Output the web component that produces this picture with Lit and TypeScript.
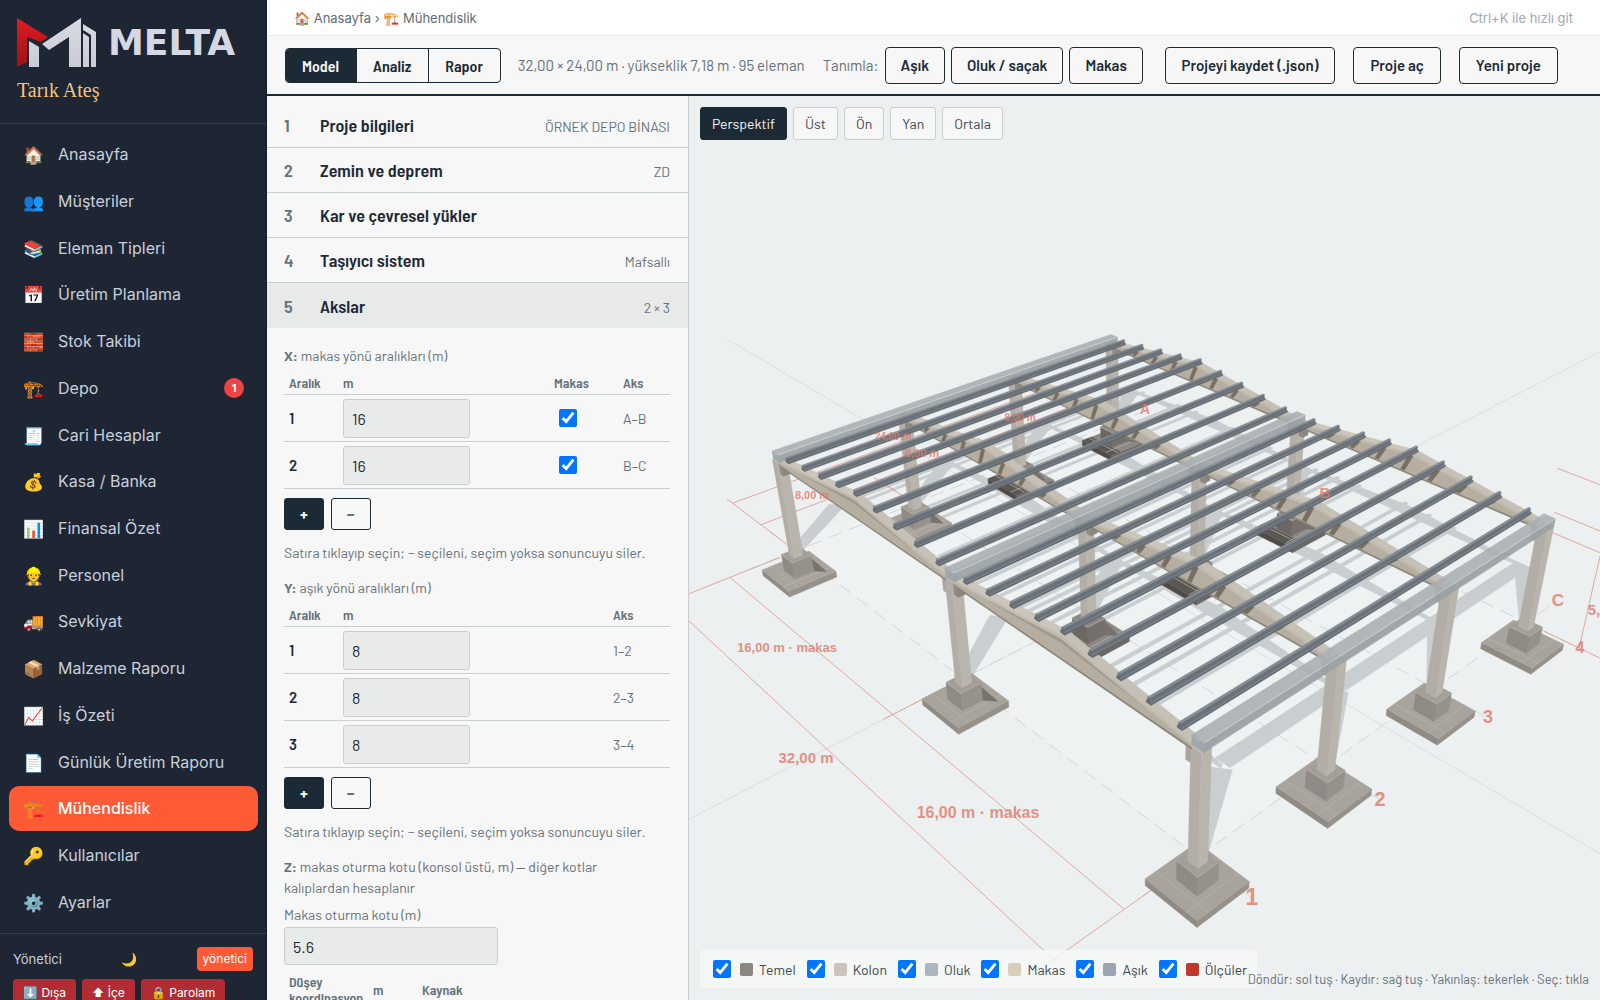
import { LitElement, html, svg, css } from "lit";
import { customElement, state } from "lit/decorators.js";
import { classMap } from "lit/directives/class-map.js";

type P3 = [number, number, number];

/* ---------- camera ---------- */
const VIEW_W = 911;
const VIEW_H = 904;
const CAM = { x: 56.734, y: -26.007, z: 36.639, azimuth: 2.391, tilt: 0.5507, focal: 1234.86 };
const FORWARD: P3 = [
  Math.cos(CAM.tilt) * Math.cos(CAM.azimuth),
  Math.cos(CAM.tilt) * Math.sin(CAM.azimuth),
  -Math.sin(CAM.tilt),
];
const RIGHT: P3 = [Math.sin(CAM.azimuth), -Math.cos(CAM.azimuth), 0];
const UP: P3 = [
  RIGHT[1] * FORWARD[2],
  -RIGHT[0] * FORWARD[2],
  RIGHT[0] * FORWARD[1] - RIGHT[1] * FORWARD[0],
];
const dot = (a: P3, b: P3) => a[0] * b[0] + a[1] * b[1] + a[2] * b[2];
const project = (p: P3): [number, number] => {
  const d: P3 = [p[0] - CAM.x, p[1] - CAM.y, p[2] - CAM.z];
  const depth = dot(d, FORWARD);
  return [VIEW_W / 2 + (CAM.focal * dot(d, RIGHT)) / depth, VIEW_H / 2 - (CAM.focal * dot(d, UP)) / depth];
};
const pointList = (pts: P3[]) => pts.map((p) => project(p).map((v) => v.toFixed(1)).join(",")).join(" ");
const face = (fill: string, ...pts: P3[]) =>
  svg`<polygon points=${pointList(pts)} fill=${fill} stroke=${fill} stroke-width="0.4" />`;
const line = (cls: string, a: P3, b: P3) => {
  const [x1, y1] = project(a);
  const [x2, y2] = project(b);
  return svg`<line class=${cls} x1=${x1} y1=${y1} x2=${x2} y2=${y2} />`;
};
const box = (x0: number, x1: number, y0: number, y1: number, z0: number, z1: number, c: string[]) => [
  face(c[1], [x0, y0, z0], [x1, y0, z0], [x1, y0, z1], [x0, y0, z1]),
  face(c[2], [x1, y0, z0], [x1, y1, z0], [x1, y1, z1], [x1, y0, z1]),
  face(c[0], [x0, y0, z1], [x1, y0, z1], [x1, y1, z1], [x0, y1, z1]),
];

/* ---------- building ---------- */
const AXES_X = [0, 16, 32];
const AXES_Y = [24, 16, 8, 0];
const BEARING = 5.6;
const RIDGE = 7.18;
const SLOPE = 0.1207;
const PURLINS = [-4, -3, -2, -1, 0, 1, 2, 3, 4].map((k) => k * 1.7316);
const roofAt = (offset: number) => RIDGE - Math.abs(offset) * SLOPE;
const SUN = [-0.54, 0.8];
const shade = (x: number, y: number, z: number): P3 => [x + SUN[0] * z, y + SUN[1] * z, 0];

const shadowStrip = (x0: number, x1: number, y0: number, y1: number, z: number) =>
  face("#c3c8cb", shade(x0, y0, z), shade(x1, y0, z), shade(x1, y1, z), shade(x0, y1, z));

const shadows = () => svg`<g opacity="0.85">
  ${AXES_Y.map((y) =>
    AXES_X.map((x) =>
      face("#c3c8cb", [x - 0.3, y - 0.2, 0], [x + 0.3, y + 0.2, 0], shade(x + 0.4, y + 0.3, BEARING), shade(x - 0.4, y - 0.3, BEARING))))}
  ${AXES_X.map((x) => shadowStrip(x - 0.45, x + 0.45, 0, 24, 6))}
  ${AXES_Y.map((y) =>
    [8, 24].map((mid) =>
      face("#c3c8cb", shade(mid - 8, y, BEARING), shade(mid - 8, y, 5.9), shade(mid, y, 6.9), shade(mid + 8, y, 5.9), shade(mid + 8, y, BEARING))))}
  ${[8, 24].map((mid) => PURLINS.map((o) => shadowStrip(mid + o - 0.14, mid + o + 0.14, 0, 24, roofAt(o))))}
</g>`;

const ground = () => svg`
  ${face("#eef2f3", [-1, 0, 0], [32, 0, 0], [32, 24, 0], [-1, 24, 0])}
  ${line("grid", [-32, 12, 0], [48, 12, 0])}
  ${line("grid", [16, -20, 0], [16, 62, 0])}
  ${AXES_X.map((x) => line("axis", [x, -3, 0], [x, 27, 0]))}
  ${AXES_Y.map((y) => line("axis", [-3, y, 0], [35, y, 0]))}
`;

const dimensions = () => svg`
  ${line("dim", [0, -4, 0], [32, -4, 0])}
  ${line("dim", [0, -7.5, 0], [32, -7.5, 0])}
  ${line("dim", [0, -1, 0], [0, -8, 0])}
  ${line("dim", [16, -1, 0], [16, -4.5, 0])}
  ${line("dim", [32, -1, 0], [32, -8, 0])}
  ${line("dim", [-4, 0, 0], [-4, 24, 0])}
  ${line("dim", [-7.5, 0, 0], [-7.5, 24, 0])}
  ${line("dim", [-8.2, 0, 0], [-1, 0, 0])}
  ${line("dim", [-4.5, 8, 0], [-1, 8, 0])}
  ${line("dim", [-4.5, 16, 0], [-1, 16, 0])}
  ${line("dim", [-8.2, 24, 0], [-1, 24, 0])}
  ${line("dim", [33, 24, 0], [40, 24, 0])}
  ${line("dim", [32, 24, BEARING], [35, 24, BEARING])}
  ${line("dim", [35, 24, 0], [35, 24, BEARING])}
  ${line("dim", [32.3, 24, 6.7], [40, 24, 6.7])}
  ${line("dim", [32, 24, 9], [40, 24, 9])}
`;

const footing = (x: number, y: number) => {
  const dim = (x === 0 && y >= 16) || (x === 16 && y >= 8);
  const pad = dim ? ["#8d8883", "#4f4b48", "#6d6863"] : ["#a8a39c", "#918b85", "#979189"];
  const stub = dim ? ["#8c8782", "#6b6763", "#75706b"] : ["#a39e97", "#8f8a85", "#96918a"];
  return [
    box(x - 1.5, x + 1.5, y - 1.5, y + 1.5, -1.7, -1.31, pad),
    dim ? face("#5b5753", [x - 1.5, y - 1.5, -1.31], [x + 1.5, y - 1.5, -1.31], [x + 1.5, y - 0.7, -1.31], [x - 1.5, y - 0.7, -1.31]) : null,
    line("seam", [x - 1.5, y - 0.9, -1.31], [x + 1.5, y - 0.9, -1.31]),
    line("seam", [x + 0.9, y - 1.5, -1.31], [x + 0.9, y + 1.5, -1.31]),
    x < 32 ? face("#77726d", [x + 0.6, y + 0.6, -1.31], [x + 1.2, y + 1.1, -1.31], [x + 0.6, y + 0.6, -0.5]) : null,
    box(x - 0.6, x + 0.6, y - 0.6, y + 0.6, -1.31, -0.25, stub),
    line("seam", [x - 0.6, y - 0.6, -0.25], [x + 0.6, y - 0.6, -0.25]),
    line("seam", [x + 0.6, y - 0.6, -0.25], [x + 0.6, y + 0.6, -0.25]),
  ];
};

const column = (x: number, y: number) => [
  x > 0 ? box(x - 0.6, x - 0.28, y - 0.22, y + 0.22, 4.9, BEARING, ["#c4beb4", "#aaa49b", "#a19a91"]) : null,
  box(x - 0.28, x + 0.28, y - 0.28, y + 0.28, -0.25, BEARING + 0.2, ["#c4beb5", "#b2ada6", "#b9b4ac"]),
  x < 32 ? box(x + 0.28, x + 0.6, y - 0.22, y + 0.22, 5.1, BEARING, ["#c4beb4", "#8f8a83", "#8b857d"]) : null,
];

const truss = (mid: number, y: number) => {
  const a = mid - 7.7;
  const b = mid + 7.7;
  const w = 0.22;
  const e = 5.95;
  const r = 6.88;
  return [
    face("#88837a", [a, y - w, BEARING], [b, y - w, BEARING], [b, y - w, BEARING + 0.12], [a, y - w, BEARING + 0.12]),
    face("#b5aea1", [a, y - w, BEARING + 0.1], [b, y - w, BEARING + 0.1], [b, y - w, e], [mid, y - w, r], [a, y - w, e]),
    y > 0
      ? PURLINS.slice(1, 8).map((o) =>
          face("#786f63",
            [mid + o - 0.2, y - w, roofAt(o) - 0.4], [mid + o + 0.1, y - w, roofAt(o) - 0.4],
            [mid + o - 0.35, y - w, BEARING + 0.12], [mid + o - 0.6, y - w, BEARING + 0.12]))
      : face("#a1998c", [mid - 5, y - w, 6.1], [mid, y - w, 6.68], [mid + 5, y - w, 6.1], [mid, y - w, 6.5]),
    face("#c2bcb0", [a, y - w, e - 0.15], [mid, y - w, r - 0.15], [mid, y - w, r], [a, y - w, e]),
    face("#c2bcb0", [b, y - w, e - 0.15], [mid, y - w, r - 0.15], [mid, y - w, r], [b, y - w, e]),
    face("#cbc6bb", [a, y - w, e], [mid, y - w, r], [mid, y + w, r], [a, y + w, e]),
    face("#c6c1b6", [mid, y - w, r], [b, y - w, e], [b, y + w, e], [mid, y + w, r]),
  ];
};

const gutter = (x: number) => svg`<g opacity="0.9">
  ${box(x - 0.32, x + 0.32, -0.2, 24.2, 5.8, 6.28, ["#abb0b3", "#9da5a9", "#9ba1a4"])}
  ${line("rim", [x + 0.32, -0.2, 6.28], [x + 0.32, 24.2, 6.28])}
</g>`;

const purlin = (mid: number, o: number) => {
  const x = mid + o;
  const z = roofAt(o);
  return [
    box(x - 0.14, x + 0.14, -0.1, 24.1, z - 0.3, z - 0.2, ["#757d85", "#5f666d", "#626970"]),
    box(x - 0.06, x + 0.06, -0.1, 24.1, z - 0.2, z, ["#858c93", "#646b72", "#6a7178"]),
  ];
};

const LABELS: [string, number, number, number][] = [
  ["1", 563, 802, 23], ["2", 691, 704, 20], ["3", 799, 622, 18], ["4", 891, 552, 16],
  ["A", 456, 314, 14], ["B", 636, 397, 15], ["C", 869, 505, 17],
  ["16,00 m · makas", 98, 552, 13], ["32,00 m", 117, 662, 15], ["16,00 m · makas", 289, 717, 16],
  ["8,00 m", 123, 400, 11], ["24,00 m", 204, 341, 10], ["8,00 m", 233, 358, 11], ["8,00 m", 331, 322, 10],
  ["5,60 m", 922, 514, 15],
];

/* ---------- data ---------- */
const NAV: [string, string, number?][] = [
  ["🏠", "Anasayfa"], ["👥", "Müşteriler"], ["📚", "Eleman Tipleri"], ["📅", "Üretim Planlama"],
  ["🧱", "Stok Takibi"], ["🏗️", "Depo", 1], ["🧾", "Cari Hesaplar"], ["💰", "Kasa / Banka"],
  ["📊", "Finansal Özet"], ["👷", "Personel"], ["🚚", "Sevkiyat"], ["📦", "Malzeme Raporu"],
  ["📈", "İş Özeti"], ["📄", "Günlük Üretim Raporu"], ["🏗️", "Mühendislik"], ["🔑", "Kullanıcılar"], ["⚙️", "Ayarlar"],
];
const STEPS: [string, string][] = [
  ["Proje bilgileri", "ÖRNEK DEPO BİNASI"], ["Zemin ve deprem", "ZD"], ["Kar ve çevresel yükler", ""],
  ["Taşıyıcı sistem", "Mafsallı"], ["Akslar", "2 × 3"],
];
const LAYERS: [string, string][] = [
  ["Temel", "#8a8880"], ["Kolon", "#c9c3b9"], ["Oluk", "#a9b8c0"], ["Makas", "#d9cfb8"], ["Aşık", "#9aa5b1"], ["Ölçüler", "#c0392b"],
];

@customElement("app-root")
export class AppRoot extends LitElement {
  @state() private view = "Perspektif";
  @state() private mode = "Model";

  static styles = css`
    :host { display: grid; grid-template-columns: 267px minmax(0, 1fr); height: 100vh; overflow: hidden;
      font-family: Barlow, Roboto, sans-serif; font-size: 14px; color: #1c2a35; background: #f7f7f7; }
    * { box-sizing: border-box; }
    button, input { font: inherit; color: inherit; }
    button { cursor: pointer; }
    a { color: inherit; text-decoration: none; }

    .side { display: flex; flex-direction: column; min-height: 0; background: #1e2533; color: #c8cfdb;
      border-right: 1px solid #161b26; font-family: Inter, sans-serif; }
    .brand { height: 124px; padding: 17px 0 0 17px; border-bottom: 1px solid #343c4d; flex: none; }
    .logo { display: flex; align-items: center; gap: 12px; height: 51px; }
    .mark { width: 79px; height: 50px; flex: none; }
    .word { font: 800 36px/36px "DejaVu Sans", sans-serif; color: #d5d8e2; }
    .owner { font: 20px/24px "Liberation Serif", serif; color: #f3c480; margin-top: 10px; }
    .nav { flex: 1; display: grid; grid-auto-rows: 1fr; gap: 2px; padding: 8px 8px 9px 9px; min-height: 0; }
    .item { display: flex; align-items: center; gap: 14px; padding: 0 14px; border-radius: 10px; font-size: 16px; line-height: 20px; min-height: 0; }
    .item.on { background: #ff5a36; color: #fff; font-weight: 500; }
    .item .ico { width: 21px; padding-top: 2px; font-size: 17px; }
    .item .txt { flex: 1; white-space: nowrap; }
    .count { width: 20px; height: 20px; border-radius: 10px; background: #ef4444; color: #fff; font-size: 11px; font-weight: 700; text-align: center; }
    .foot { flex: none; height: 67px; overflow: hidden; border-top: 1px solid #343c4d; padding: 13px 13px 0; }
    .who { display: flex; align-items: center; justify-content: space-between; font-size: 13px; line-height: 24px; }
    .moon { border: 0; background: none; padding: 0; font-size: 13px; }
    .role { background: #ff5a36; color: #fff; border-radius: 4px; padding: 0 6px; font-size: 12px; }
    .acts { display: flex; gap: 6px; margin-top: 8px; }
    .acts button { border: 0; border-radius: 4px; background: #b22d33; color: #fff; font-size: 12px; line-height: 16px; padding: 6px 10px; white-space: nowrap; }

    .main { display: flex; flex-direction: column; min-width: 0; min-height: 0; }
    .crumbs { flex: none; display: flex; justify-content: space-between; align-items: center; height: 36px; padding: 0 27px;
      background: #fff; border-bottom: 1px solid #e4e6e8; font: 13px/20px Inter, sans-serif; color: #5f6b7a; }
    .crumbs .hint { color: #a0a8b6; }
    .bar { flex: none; display: flex; align-items: center; height: 60px; padding: 0 42px 0 18px; border-bottom: 2px solid #1c2a35; }
    .seg { display: flex; border: 1px solid #1c2a35; border-radius: 4px; overflow: hidden; margin-right: 17px; }
    .seg button { height: 33px; padding: 2px 17px 0 16px; border: 0; border-left: 1px solid #1c2a35; background: transparent; font: 600 16px/20px "Barlow Semi Condensed", Roboto, sans-serif; }
    .seg button:first-child { border-left: 0; }
    .seg button.on { background: #1c2a35; color: #f7f7f7; }
    .info { color: #65727b; font-size: 15px; white-space: nowrap; margin-right: 18px; }
    .def { color: #65727b; font-size: 15px; margin-right: 6px; }
    .btn { height: 37px; padding: 0 15px; border: 1px solid #1c2a35; border-radius: 4px; background: transparent; font-weight: 600; font-size: 15px; white-space: nowrap; }
    .group { display: flex; gap: 6px; }
    .files { display: flex; gap: 18px; margin-left: auto; }
    .files .btn { padding: 0 16px; }

    .work { flex: 1; display: grid; grid-template-columns: 422px minmax(0, 1fr); min-height: 0; }
    .panel { border-right: 1px solid #c9ced0; overflow: hidden; padding-top: 7px; min-height: 0; }
    .step { display: flex; align-items: center; width: 100%; height: 45px; padding: 0 18px 0 17px; border: 0; border-bottom: 1px solid #c9ced0;
      background: transparent; text-align: left; }
    .step.on { background: #e8eaea; border-bottom: 0; }
    .step .n { width: 36px; color: #65727b; }
    .step .n, .step .t { font: 600 18px/24px "Barlow Semi Condensed", Roboto, sans-serif; }
    .step .v { margin-left: auto; color: #65727b; padding-top: 3px; }
    .body { padding: 17px 18px 0 17px; color: #65727b; line-height: 21px; }
    .body p { margin: 0; }
    .lead { padding-right: 12px; }
    .lead b { font-weight: 700; }
    table { width: 100%; border-collapse: collapse; table-layout: fixed; color: #65727b; }
    th { font: 600 14px/16px "Barlow Semi Condensed", Roboto, sans-serif; text-align: left; padding: 9px 5px 3px; height: 28px; }
    tr { border-bottom: 1px solid #c9ced0; }
    td { height: 47px; padding: 0 5px; }
    tbody th { font: 600 15px/20px Barlow, Roboto, sans-serif; color: #1c2a35; padding: 0 5px; height: 47px; }
    .c1 { width: 54px; } .c2 { width: 211px; } .c2y { width: 270px; } .c3 { width: 69px; }
    .l1 { width: 84px; } .l2 { width: 49px; }
    .field { height: 39px; padding: 0 8px; border: 1px solid #c9ced0; border-radius: 3px; background: #e9ebeb; color: #1c2a35; font-size: 16px; }
    .len { width: 127px; display: block; }
    .tick { width: 18px; height: 18px; margin: 0; display: block; }
    td .tick { margin-left: 5px; }
    .pm { display: flex; gap: 7px; margin: 9px 0 12px; }
    .pm button { width: 40px; height: 32px; padding: 0; border: 1px solid #1c2a35; border-radius: 3px; background: transparent; font-weight: 700; font-size: 16px; line-height: 20px; }
    .pm .add { background: #1c2a35; color: #fff; }
    .note { padding-bottom: 14px; }
    .kot { display: block; padding-top: 6px; line-height: 21px; }
    .seat { display: block; width: 214px; height: 38px; margin-top: 2px; }
    .levels { width: 214px; }
    .levels tr { border: 0; }

    .canvas { position: relative; min-width: 0; min-height: 0; background: #ecf0f1; overflow: hidden; }
    .scene { display: block; width: 100%; height: 100%; }
    .grid { stroke: #dcdfe0; stroke-width: 1; }
    .axis { stroke: #d3d7d9; stroke-width: 1; stroke-dasharray: 14 8; }
    .dim { stroke: #e08a7c; stroke-width: 1; opacity: 0.7; }
    .seam { stroke: #bbb6b0; stroke-width: 1; opacity: 0.7; }
    .rim { stroke: #c6cbcd; stroke-width: 1; }
    .label { font-family: "Liberation Sans", sans-serif; font-weight: 700; fill: #de7b6b; opacity: 0.8; text-anchor: middle; dominant-baseline: central; }
    .views { position: absolute; left: 11px; top: 11px; display: flex; gap: 6px; }
    .views button { height: 33px; padding: 0 11px; border: 1px solid #c9ced0; border-radius: 3px; background: #f7f7f7; font-size: 14px; color: #3a4750; }
    .views button.on { background: #1c2a35; border-color: #1c2a35; color: #f7f7f7; }
    .legend { position: absolute; left: 11px; bottom: 12px; display: flex; align-items: center; gap: 11px; height: 38px; padding: 0 10px 0 13px;
      border-radius: 4px; background: rgba(247, 248, 248, 0.8); }
    .layer { display: flex; align-items: center; color: #3a4750; font-size: 14px; }
    .sw { width: 13px; height: 13px; border-radius: 2px; margin: 0 6px 0 9px; }
    .help { position: absolute; right: 11px; bottom: 11px; color: #65727b; line-height: 20px; font-size: 13px; }
  `;

  private axisTable(name: string, rows: [string, string][], withTruss: boolean) {
    return html`<table>
      <colgroup>
        <col class="c1" /><col class=${withTruss ? "c2" : "c2y"} />${withTruss ? html`<col class="c3" />` : null}<col />
      </colgroup>
      <thead>
        <tr><th scope="col">Aralık</th><th scope="col">m</th>${withTruss ? html`<th scope="col">Makas</th>` : null}<th scope="col">Aks</th></tr>
      </thead>
      <tbody>
        ${rows.map(([value, axis], i) => html`<tr>
          <th scope="row">${i + 1}</th>
          <td><input class="field len" type="text" aria-label="${name} ${i + 1} m" .value=${value} /></td>
          ${withTruss ? html`<td><input class="tick" type="checkbox" aria-label="Makas ${i + 1}" checked /></td>` : null}
          <td>${axis}</td>
        </tr>`)}
      </tbody>
    </table>
    <div class="pm"><button class="add">+</button><button>−</button></div>
    <p class="note">Satıra tıklayıp seçin; − seçileni, seçim yoksa sonuncuyu siler.</p>`;
  }

  private scene() {
    return svg`<svg class="scene" viewBox="0 1 ${VIEW_W} ${VIEW_H}" preserveAspectRatio="xMidYMid slice" role="img" aria-label="Model">
      ${ground()}
      ${shadows()}
      ${dimensions()}
      ${AXES_Y.map((y) => AXES_X.map((x) => footing(x, y)))}
      ${AXES_Y.map((y) => AXES_X.map((x) => column(x, y)))}
      ${AXES_Y.map((y) => [truss(8, y), truss(24, y)])}
      ${AXES_X.map((x) => gutter(x))}
      ${[8, 24].map((mid) => PURLINS.map((o) => purlin(mid, o)))}
      ${LABELS.map(([t, x, y, s]) => svg`<text class="label" x=${x} y=${y} font-size=${s}>${t}</text>`)}
    </svg>`;
  }

  render() {
    return html`
      <aside class="side">
        <div class="brand">
          <div class="logo">
            <svg class="mark" viewBox="0 0 79 50" aria-hidden="true">
              <defs>
                <linearGradient id="r" x1="0" y1="0" x2="0" y2="1"><stop offset="0" stop-color="#e01b22" /><stop offset="1" stop-color="#9c1218" /></linearGradient>
                <linearGradient id="s" x1="0" y1="0" x2="0" y2="1"><stop offset="0" stop-color="#d9dbe3" /><stop offset="1" stop-color="#c9ccd6" /></linearGradient>
              </defs>
              <path fill="url(#r)" d="M0 0 31 19 24 24 10 19V44L0 49Z" />
              <path fill="url(#s)" d="M12 23 22 29V49H12ZM25 26 64 0V49H52V19L32 32ZM66 6 79 14V49H74V17L66 12ZM66 15 72 19V49H66Z" />
            </svg>
            <span class="word">MELTA</span>
          </div>
          <div class="owner">Tarık Ateş</div>
        </div>
        <nav class="nav">
          ${NAV.map(([ico, txt, n]) => html`<a href="#" class=${classMap({ item: true, on: txt === "Mühendislik" })}>
            <span class="ico">${ico}</span><span class="txt">${txt}</span>${n ? html`<span class="count">${n}</span>` : null}
          </a>`)}
        </nav>
        <div class="foot">
          <div class="who"><span>Yönetici</span><button class="moon" aria-label="Tema">🌙</button><span class="role">yönetici</span></div>
          <div class="acts"><button>⬇️ Dışa</button><button>⬆ İçe</button><button>🔒 Parolam</button></div>
        </div>
      </aside>
      <main class="main">
        <div class="crumbs">
          <span>🏠 <a href="#">Anasayfa</a> › 🏗️ Mühendislik</span>
          <span class="hint">Ctrl+K ile hızlı git</span>
        </div>
        <div class="bar">
          <div class="seg">
            ${["Model", "Analiz", "Rapor"].map((m) => html`<button class=${classMap({ on: m === this.mode })} @click=${() => (this.mode = m)}>${m}</button>`)}
          </div>
          <span class="info">32,00 × 24,00 m · yükseklik 7,18 m · 95 eleman</span>
          <span class="def">Tanımla:</span>
          <div class="group"><button class="btn">Aşık</button><button class="btn">Oluk / saçak</button><button class="btn">Makas</button></div>
          <div class="files"><button class="btn">Projeyi kaydet (.json)</button><button class="btn">Proje aç</button><button class="btn">Yeni proje</button></div>
        </div>
        <div class="work">
          <section class="panel">
            ${STEPS.map(([t, v], i) => html`<button class=${classMap({ step: true, on: i === 4 })}><span class="n">${i + 1}</span><span class="t">${t}</span><span class="v">${v}</span></button>`)}
            <div class="body">
              <p class="lead"><b>X:</b> makas yönü aralıkları (m)</p>
              ${this.axisTable("X", [["16", "A–B"], ["16", "B–C"]], true)}
              <p class="lead"><b>Y:</b> aşık yönü aralıkları (m)</p>
              ${this.axisTable("Y", [["8", "1–2"], ["8", "2–3"], ["8", "3–4"]], false)}
              <p class="lead"><b>Z:</b> makas oturma kotu (konsol üstü, m) — diğer kotlar kalıplardan hesaplanır</p>
              <label class="kot" for="seat">Makas oturma kotu (m)</label>
              <input id="seat" class="field seat" type="text" .value=${"5.6"} />
              <table class="levels">
                <colgroup><col class="l1" /><col class="l2" /><col /></colgroup>
                <thead><tr><th scope="col">Düşey koordinasyon</th><th scope="col">m</th><th scope="col">Kaynak</th></tr></thead>
              </table>
            </div>
          </section>
          <section class="canvas">
            ${this.scene()}
            <div class="views">
              ${["Perspektif", "Üst", "Ön", "Yan", "Ortala"].map((v) => html`<button class=${classMap({ on: v === this.view })} @click=${() => (this.view = v)}>${v}</button>`)}
            </div>
            <div class="legend">
              ${LAYERS.map(([name, color]) => html`<label class="layer"><input class="tick" type="checkbox" checked /><span class="sw" style="background:${color}"></span>${name}</label>`)}
            </div>
            <div class="help">Döndür: sol tuş · Kaydır: sağ tuş · Yakınlaş: tekerlek · Seç: tıkla</div>
          </section>
        </div>
      </main>
    `;
  }
}
